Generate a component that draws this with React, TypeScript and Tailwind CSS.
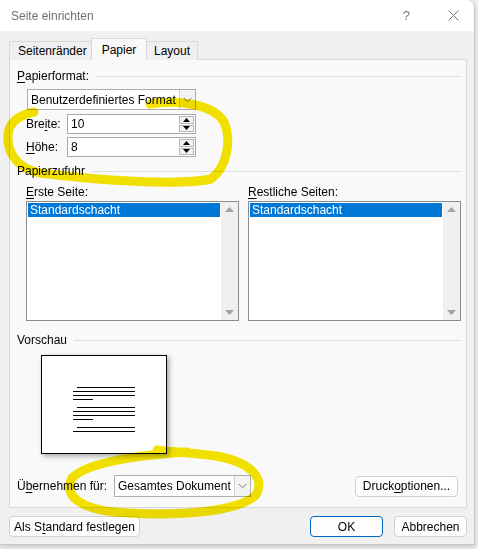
import React from "react";

const U = ({ children }: { children: React.ReactNode }) => (
  <span className="underline decoration-1 underline-offset-2">{children}</span>
);

function GroupHeader({ children }: { children: React.ReactNode }) {
  return (
    <div className="flex h-[16px] items-center">
      <span className="leading-none">{children}</span>
      <div className="ml-[7px] h-px flex-1 bg-[#dcdcdc]" />
    </div>
  );
}

function Chevron() {
  return (
    <svg width="9" height="6" viewBox="0 0 9 6">
      <path d="M0.5 0.8 L4.5 4.8 L8.5 0.8" fill="none" stroke="#7a7a7a" strokeWidth="1" />
    </svg>
  );
}

function Select({ value, width, height }: { value: string; width: string; height: string }) {
  return (
    <div className={`flex ${width} ${height} border border-[#adadad] bg-white`}>
      <div className="flex flex-1 items-center pl-[3px] text-black">{value}</div>
      <div className="flex w-[16px] items-center justify-center border-l border-[#d0d0d0] bg-[#f3f3f3]">
        <Chevron />
      </div>
    </div>
  );
}

function Spin({ value }: { value: string }) {
  return (
    <div className="flex h-[20px] w-[129px] border border-[#a9a9a9] bg-white">
      <div className="flex flex-1 items-center pl-[3px]">{value}</div>
      <div className="flex w-[16px] flex-col gap-px py-px pr-px">
        <div className="flex flex-1 items-center justify-center border border-[#b5b5b5] bg-[#f3f3f3]">
          <svg width="7" height="4" viewBox="0 0 7 4">
            <path d="M0 4 L3.5 0 L7 4 Z" fill="#000" />
          </svg>
        </div>
        <div className="flex flex-1 items-center justify-center border border-[#b5b5b5] bg-[#f3f3f3]">
          <svg width="7" height="4" viewBox="0 0 7 4">
            <path d="M0 0 L3.5 4 L7 0 Z" fill="#000" />
          </svg>
        </div>
      </div>
    </div>
  );
}

function ListBox() {
  return (
    <div className="flex h-[120px] w-[213px] border border-[#8c8c8c] bg-white">
      <div className="flex-1 p-px">
        <div className="flex h-[14px] items-center bg-[#0078d7] pl-[2px] text-white">Standardschacht</div>
      </div>
      <div className="flex w-[17px] flex-col items-center justify-between bg-[#f0f0f0] py-[5px]">
        <svg width="9" height="5" viewBox="0 0 9 5">
          <path d="M0 5 L4.5 0 L9 5 Z" fill="#a3a3a3" />
        </svg>
        <svg width="9" height="5" viewBox="0 0 9 5">
          <path d="M0 0 L4.5 5 L9 0 Z" fill="#a3a3a3" />
        </svg>
      </div>
    </div>
  );
}

function Button({ children, width, primary }: { children: React.ReactNode; width: string; primary?: boolean }) {
  return (
    <div
      className={`flex h-[21px] ${width} items-center justify-center rounded-[4px] border bg-[#fdfdfd] ${
        primary ? "border-[#0067c0]" : "border-[#d0d0d0]"
      }`}
    >
      {children}
    </div>
  );
}

function PreviewLine({ w, ml }: { w: string; ml: string }) {
  return <div className={`h-px bg-black ${w} ${ml}`} />;
}

export default function App() {
  return (
    <div className="relative h-[549px] w-[478px] overflow-hidden bg-[#ededed] font-['Liberation_Sans',Arial,sans-serif] text-[12px] text-black">
      <div className="flex h-[545px] w-[475px] flex-col rounded-tr-[8px] border-r border-b border-[#c8c8c8] bg-[#f0f0f0] shadow-[0_2px_4px_rgba(0,0,0,0.15)]">
        {/* title bar */}
        <div className="flex h-[31px] items-center rounded-tr-[8px] bg-white pl-[11px] text-[#707070]">
          <span>Seite einrichten</span>
          <span className="ml-auto mr-[38px] text-[13px] text-[#777]">?</span>
          <svg width="11" height="11" viewBox="0 0 11 11" className="mr-[15px]">
            <path d="M0.5 0.5 L10.5 10.5 M10.5 0.5 L0.5 10.5" stroke="#777" strokeWidth="1" />
          </svg>
        </div>

        <div className="flex flex-1 flex-col pl-[9px] pr-[7px] pt-[7px]">
          {/* tabs */}
          <div className="relative z-10 -mb-px flex h-[22px] items-end">
            <div className="flex h-[19px] w-[82px] items-center border-t border-l border-[#d9d9d9] bg-[#f0f0f0] pl-[8px]">
              Seitenränder
            </div>
            <div className="flex h-[22px] w-[56px] items-center justify-center border-x border-t border-[#d9d9d9] bg-[#f9f9f9]">
              Papier
            </div>
            <div className="flex h-[19px] w-[51px] items-center justify-center border-t border-r border-[#d9d9d9] bg-[#f0f0f0]">
              Layout
            </div>
          </div>

          {/* tab panel */}
          <div className="flex h-[449px] flex-col border border-[#d9d9d9] bg-[#f9f9f9] pl-[7px] pr-[6px]">
            <div className="mt-[8px]">
              <GroupHeader>
                <U>P</U>apierformat:
              </GroupHeader>
            </div>
            <div className="ml-[10px] mt-[5px]">
              <Select value="Benutzerdefiniertes Format" width="w-[169px]" height="h-[21px]" />
            </div>
            <div className="ml-[9px] mt-[4px] flex items-center">
              <span className="w-[41px]">
                Bre<U>i</U>te:
              </span>
              <Spin value="10" />
            </div>
            <div className="ml-[9px] mt-[3px] flex items-center">
              <span className="w-[41px]">
                <U>H</U>öhe:
              </span>
              <Spin value="8" />
            </div>

            <div className="mt-[6px]">
              <GroupHeader>Papierzufuhr</GroupHeader>
            </div>
            <div className="ml-[9px] mt-[5px] flex gap-[9px]">
              <div className="flex flex-col">
                <div className="flex h-[16px] items-center">
                  <span>
                    <U>E</U>rste Seite:
                  </span>
                </div>
                <div className="mt-[1px]">
                  <ListBox />
                </div>
              </div>
              <div className="flex flex-col">
                <div className="flex h-[16px] items-center">
                  <span>
                    <U>R</U>estliche Seiten:
                  </span>
                </div>
                <div className="mt-[1px]">
                  <ListBox />
                </div>
              </div>
            </div>

            <div className="mt-[11px]">
              <GroupHeader>Vorschau</GroupHeader>
            </div>
            <div className="ml-[24px] mt-[7px] h-[99px] w-[126px] border border-black bg-white pt-[31px] shadow-[2px_2px_5px_rgba(0,0,0,0.35)]">
              <div className="flex flex-col gap-[3px]">
                <PreviewLine w="w-[58px]" ml="ml-[35px]" />
                <PreviewLine w="w-[62px]" ml="ml-[31px]" />
                <PreviewLine w="w-[62px]" ml="ml-[31px]" />
                <PreviewLine w="w-[20px]" ml="ml-[31px]" />
              </div>
              <div className="mt-[7px] flex flex-col gap-[3px]">
                <PreviewLine w="w-[58px]" ml="ml-[35px]" />
                <PreviewLine w="w-[62px]" ml="ml-[31px]" />
                <PreviewLine w="w-[62px]" ml="ml-[31px]" />
                <PreviewLine w="w-[20px]" ml="ml-[31px]" />
              </div>
              <div className="mt-[7px] flex flex-col gap-[3px]">
                <PreviewLine w="w-[58px]" ml="ml-[35px]" />
                <PreviewLine w="w-[62px]" ml="ml-[31px]" />
              </div>
            </div>

            <div className="mt-[21px] flex h-[22px] items-center">
              <span className="w-[97px]">
                Ü<U>b</U>ernehmen für:
              </span>
              <Select value="Gesamtes Dokument" width="w-[137px]" height="h-[22px]" />
              <div className="ml-auto mr-[2px]">
                <Button width="w-[103px]">
                  <span>
                    Druck<U>o</U>ptionen...
                  </span>
                </Button>
              </div>
            </div>
          </div>

          {/* bottom buttons */}
          <div className="mt-[8px] flex items-center">
            <Button width="w-[131px]">
              <span>
                Als S<U>t</U>andard festlegen
              </span>
            </Button>
            <div className="ml-auto flex gap-[11px]">
              <Button width="w-[73px]" primary>
                OK
              </Button>
              <Button width="w-[73px]">Abbrechen</Button>
            </div>
          </div>
        </div>
      </div>

      {/* yellow marker highlights (highlighter ink, so text shows through) */}
      <svg
        className="pointer-events-none absolute left-0 top-0 mix-blend-multiply"
        width="478"
        height="549"
        viewBox="0 0 478 549"
      >
        <path
          d="M150 104 C180 99 214 105 224 122 C232 140 227 167 211 179 C180 186 95 180 40 173 C16 168 7 152 8 135 C9 122 19 115 34 112"
          fill="none"
          stroke="#f7e500"
          strokeWidth="9"
          strokeLinecap="round"
        />
        <path
          d="M187 452 C140 455 88 462 72 478 C62 495 80 511 128 513 C180 516 238 512 256 495 C266 478 250 462 216 456 C196 453 172 452 157 450"
          fill="none"
          stroke="#f7e500"
          strokeWidth="9"
          strokeLinecap="round"
        />
      </svg>
    </div>
  );
}
